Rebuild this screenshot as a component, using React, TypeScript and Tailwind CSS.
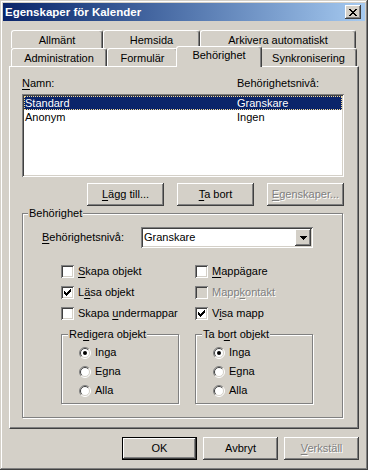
import type { ReactNode } from 'react'

// Classic Windows 3D edges, done with stacked inset shadows.
const raised =
  'shadow-[inset_-1px_-1px_#404040,inset_1px_1px_#ffffff,inset_-2px_-2px_#808080,inset_2px_2px_#d4d0c8]'
const sunken =
  'shadow-[inset_1px_1px_#808080,inset_-1px_-1px_#ffffff,inset_2px_2px_#404040,inset_-2px_-2px_#d4d0c8]'
const etched = 'border border-[#808080] shadow-[inset_1px_1px_#ffffff,1px_1px_#ffffff]'
const grayed = 'text-[#808080] [text-shadow:1px_1px_0_#ffffff]'

function Key({ children }: { children: ReactNode }) {
  return <span className="underline decoration-1 underline-offset-[2px]">{children}</span>
}

function Tab({ label, width, selected }: { label: string; width: string; selected?: boolean }) {
  if (selected) {
    return (
      <div
        className={`relative z-10 -mx-[2px] -mt-[2px] flex h-[21px] shrink-0 justify-center rounded-t-[3px] border-l border-r border-t border-white border-r-[#404040] bg-[#d4d0c8] pt-[2px] shadow-[inset_-1px_0_#808080] ${width}`}
      >
        {label}
      </div>
    )
  }
  return (
    <div
      className={`flex h-[18px] shrink-0 justify-center rounded-t-[3px] border-l border-r border-t border-white border-r-[#404040] bg-[#d4d0c8] pt-[3px] shadow-[inset_-1px_0_#808080] ${width}`}
    >
      {label}
    </div>
  )
}

function Button({
  children,
  width = 'w-[75px]',
  disabled,
  isDefault,
}: {
  children: ReactNode
  width?: string
  disabled?: boolean
  isDefault?: boolean
}) {
  return (
    <div
      className={`flex h-[23px] items-center justify-center ${width} ${raised} ${isDefault ? 'border border-black' : ''} ${disabled ? grayed : ''}`}
    >
      {children}
    </div>
  )
}

function Check({ checked, disabled }: { checked?: boolean; disabled?: boolean }) {
  return (
    <span
      className={`flex h-[13px] w-[13px] shrink-0 items-center justify-center ${disabled ? 'bg-[#d4d0c8]' : 'bg-white'} ${sunken}`}
    >
      {checked && (
        <svg width="7" height="7" viewBox="0 0 7 7" shapeRendering="crispEdges">
          <path
            d="M6 0h1v1h-1zM5 1h2v1h-2zM0 2h1v1h-1zM4 2h3v1h-3zM0 3h2v1h-2zM3 3h3v1h-3zM0 4h5v1h-5zM1 5h3v1h-3zM2 6h1v1h-1z"
            fill="#000"
          />
        </svg>
      )}
    </span>
  )
}

function CheckRow({ label, checked, disabled }: { label: ReactNode; checked?: boolean; disabled?: boolean }) {
  return (
    <div className="flex h-[21px] items-center gap-[4px]">
      <Check checked={checked} disabled={disabled} />
      <span className={disabled ? grayed : ''}>{label}</span>
    </div>
  )
}

function Radio({ label, checked }: { label: string; checked?: boolean }) {
  return (
    <div className="flex h-[19px] items-center gap-[4px]">
      <svg width="12" height="12" viewBox="0 0 12 12" className="shrink-0">
        <circle cx="6" cy="6" r="5" fill="#fff" />
        <path d="M2.1 9.9A5.5 5.5 0 0 1 9.9 2.1" stroke="#808080" fill="none" />
        <path d="M9.9 2.1A5.5 5.5 0 0 1 2.1 9.9" stroke="#ffffff" fill="none" />
        <path d="M2.8 9.2A4.5 4.5 0 0 1 9.2 2.8" stroke="#404040" fill="none" />
        <path d="M9.2 2.8A4.5 4.5 0 0 1 2.8 9.2" stroke="#d4d0c8" fill="none" />
        {checked && <circle cx="6" cy="6" r="2" fill="#000" />}
      </svg>
      <span>{label}</span>
    </div>
  )
}

function RadioGroup({ title, options }: { title: ReactNode; options: string[] }) {
  return (
    <div className={`relative h-[70px] w-[118px] pl-[17px] pt-[8px] ${etched}`}>
      <span className="absolute -top-[7px] left-[6px] bg-[#d4d0c8] px-[1px]">{title}</span>
      {options.map((o, i) => (
        <Radio key={o} label={o} checked={i === 0} />
      ))}
    </div>
  )
}

const members = [
  { name: 'Standard', level: 'Granskare' },
  { name: 'Anonym', level: 'Ingen' },
]

export default function App() {
  return (
    <div
      className={`h-[470px] w-[368px] bg-[#d4d0c8] p-[3px] font-[family-name:Liberation_Sans,Arial,sans-serif] text-[11px] leading-[13px] text-black shadow-[inset_-1px_-1px_#404040,inset_1px_1px_#d4d0c8,inset_-2px_-2px_#808080,inset_2px_2px_#ffffff]`}
    >
      {/* caption */}
      <div className="flex h-[18px] items-center bg-linear-to-r from-[#0a246a] to-[#a6caf0] pl-[2px] pr-[4px]">
        <span className="flex-1 text-[11.5px] font-bold text-white">Egenskaper för Kalender</span>
        <div className={`flex h-[14px] w-[16px] items-center justify-center bg-[#d4d0c8] ${raised}`}>
          <svg width="8" height="7" viewBox="0 0 8 7" shapeRendering="crispEdges">
            <path
              d="M0 0h2v1h-2zM6 0h2v1h-2zM1 1h2v1h-2zM5 1h2v1h-2zM2 2h4v1h-4zM3 3h2v1h-2zM2 4h4v1h-4zM1 5h2v1h-2zM5 5h2v1h-2zM0 6h2v1h-2zM6 6h2v1h-2z"
              fill="#000"
            />
          </svg>
        </div>
      </div>

      {/* tab control */}
      <div className="ml-[6px] mt-[9px] w-[350px]">
        <div className="flex h-[18px] pl-[2px]">
          <Tab label="Allmänt" width="w-[92px]" />
          <Tab label="Hemsida" width="w-[97px]" />
          <Tab label="Arkivera automatiskt" width="w-[156px]" />
        </div>
        <div className="flex h-[18px] items-start pl-[2px]">
          <Tab label="Administration" width="w-[96px]" />
          <Tab label="Formulär" width="w-[71px]" />
          <Tab label="Behörighet" width="w-[86px]" selected />
          <Tab label="Synkronisering" width="w-[97px]" />
        </div>

        <div className="h-[363px] border-b border-l border-r border-t border-white border-b-[#404040] border-r-[#404040] pl-[12px] pt-[10px] shadow-[inset_-1px_-1px_#808080]">
          <div className="flex h-[13px]">
            <div className="w-[215px]">
              <Key>N</Key>amn:
            </div>
            <div>Behörighetsnivå:</div>
          </div>

          <div className={`mt-[4px] h-[83px] w-[322px] bg-white p-[2px] ${sunken}`}>
            {members.map((m, i) => (
              <div
                key={m.name}
                className={`flex h-[14px] items-center ${i === 0 ? 'border border-dotted border-[#f5db95] bg-[#0a246a] text-white' : 'pl-[1px]'}`}
              >
                <span className="w-[212px]">{m.name}</span>
                <span>{m.level}</span>
              </div>
            ))}
          </div>

          <div className="mt-[6px] flex w-[322px] justify-end gap-[13px]">
            <Button width="w-[77px]">
              <span>
                <Key>L</Key>ägg till...
              </span>
            </Button>
            <Button width="w-[77px]">
              <span>
                <Key>T</Key>a bort
              </span>
            </Button>
            <Button width="w-[77px]" disabled>
              <span>
                <Key>E</Key>genskaper...
              </span>
            </Button>
          </div>

          <div className={`relative mt-[7px] h-[205px] w-[321px] pt-[13px] ${etched}`}>
            <span className="absolute -top-[7px] left-[5px] bg-[#d4d0c8] px-[1px]">Behörighet</span>

            <div className="flex h-[21px] items-center pl-[19px]">
              <span className="w-[99px]">
                <Key>B</Key>ehörighetsnivå:
              </span>
              <div className={`flex h-[21px] w-[172px] items-center bg-white p-[2px] ${sunken}`}>
                <span className="flex-1 pl-[1px]">Granskare</span>
                <div className={`flex h-[17px] w-[16px] items-center justify-center bg-[#d4d0c8] ${raised}`}>
                  <svg width="7" height="4" viewBox="0 0 7 4" shapeRendering="crispEdges">
                    <path d="M0 0h7v1h-7zM1 1h5v1h-5zM2 2h3v1h-3zM3 3h1v1h-1z" fill="#000" />
                  </svg>
                </div>
              </div>
            </div>

            <div className="mt-[13px] flex pl-[38px]">
              <div className="w-[134px]">
                <CheckRow
                  label={
                    <>
                      <Key>S</Key>kapa objekt
                    </>
                  }
                />
                <CheckRow
                  checked
                  label={
                    <>
                      L<Key>ä</Key>sa objekt
                    </>
                  }
                />
                <CheckRow
                  label={
                    <>
                      Skapa <Key>u</Key>ndermappar
                    </>
                  }
                />
              </div>
              <div>
                <CheckRow
                  label={
                    <>
                      <Key>M</Key>appägare
                    </>
                  }
                />
                <CheckRow
                  disabled
                  label={
                    <>
                      Mapp<Key>k</Key>ontakt
                    </>
                  }
                />
                <CheckRow
                  checked
                  label={
                    <>
                      V<Key>i</Key>sa mapp
                    </>
                  }
                />
              </div>
            </div>

            <div className="mt-[10px] flex gap-[16px] pl-[38px]">
              <RadioGroup
                title={
                  <>
                    Re<Key>d</Key>igera objekt
                  </>
                }
                options={['Inga', 'Egna', 'Alla']}
              />
              <RadioGroup
                title={
                  <>
                    Ta b<Key>o</Key>rt objekt
                  </>
                }
                options={['Inga', 'Egna', 'Alla']}
              />
            </div>
          </div>
        </div>
      </div>

      {/* dialog buttons */}
      <div className="mt-[8px] flex justify-end gap-[6px] pr-[6px]">
        <Button isDefault>OK</Button>
        <Button>Avbryt</Button>
        <Button disabled>
          <span>
            <Key>V</Key>erkställ
          </span>
        </Button>
      </div>
    </div>
  )
}
